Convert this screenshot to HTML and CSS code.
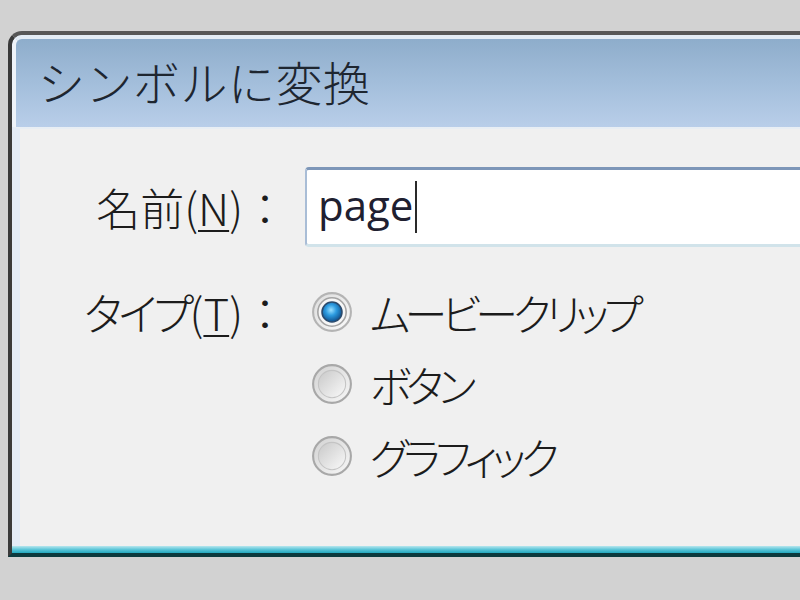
FILE: index.html
```html
<!DOCTYPE html>
<html lang="ja">
<head>
<meta charset="utf-8">
<title>シンボルに変換</title>
<link rel="stylesheet" href="styles.css">
</head>
<body>
<div class="window">
  <div class="titlebar"><span class="title">シンボルに変換</span></div>
  <div class="client">
    <div class="form">
      <div class="label">名前(<u>N</u>)：</div>
      <div class="textbox"><span class="value">page</span><span class="caret"></span></div>
      <div class="label label-type"><span class="kana">タイプ</span>(<u>T</u>)：</div>
      <div class="options">
        <div class="option">
          <svg class="radio" width="42" height="42" viewBox="0 0 40 40">
            <defs>
              <radialGradient id="blue" cx="0.45" cy="0.4" r="0.6">
                <stop offset="0" stop-color="#9be0ff"/>
                <stop offset="0.45" stop-color="#2c9be0"/>
                <stop offset="1" stop-color="#0f4f8c"/>
              </radialGradient>
              <linearGradient id="ringC" x1="0" y1="0" x2="1" y2="1">
                <stop offset="0" stop-color="#dcdcdc"/>
                <stop offset="1" stop-color="#fbfbfb"/>
              </linearGradient>
            </defs>
            <circle cx="20" cy="20" r="18" fill="url(#ringC)" stroke="#b4b4b4" stroke-width="2"/>
            <circle cx="20" cy="20" r="13.5" fill="#f6f6f6" stroke="#a3a3a3" stroke-width="1.5"/>
            <circle cx="20" cy="20" r="9.5" fill="url(#blue)" stroke="#2a4a6c" stroke-width="1.5"/>
          </svg>
          <span class="opt-text">ムービークリップ</span>
        </div>
        <div class="option">
          <svg class="radio" width="42" height="42" viewBox="0 0 40 40">
            <defs>
              <linearGradient id="ringU1" x1="0" y1="0" x2="1" y2="1">
                <stop offset="0" stop-color="#d2d2d2"/>
                <stop offset="1" stop-color="#f8f8f8"/>
              </linearGradient>
              <linearGradient id="inU1" x1="0" y1="0" x2="1" y2="1">
                <stop offset="0" stop-color="#c8c8c8"/>
                <stop offset="1" stop-color="#fafafa"/>
              </linearGradient>
            </defs>
            <circle cx="20" cy="20" r="18" fill="url(#ringU1)" stroke="#a8a8a8" stroke-width="2"/>
            <circle cx="20" cy="20" r="13" fill="url(#inU1)" stroke="#c4c4c4" stroke-width="1"/>
          </svg>
          <span class="opt-text">ボタン</span>
        </div>
        <div class="option">
          <svg class="radio" width="42" height="42" viewBox="0 0 40 40">
            <defs>
              <linearGradient id="ringU2" x1="0" y1="0" x2="1" y2="1">
                <stop offset="0" stop-color="#d2d2d2"/>
                <stop offset="1" stop-color="#f8f8f8"/>
              </linearGradient>
              <linearGradient id="inU2" x1="0" y1="0" x2="1" y2="1">
                <stop offset="0" stop-color="#c8c8c8"/>
                <stop offset="1" stop-color="#fafafa"/>
              </linearGradient>
            </defs>
            <circle cx="20" cy="20" r="18" fill="url(#ringU2)" stroke="#a8a8a8" stroke-width="2"/>
            <circle cx="20" cy="20" r="13" fill="url(#inU2)" stroke="#c4c4c4" stroke-width="1"/>
          </svg>
          <span class="opt-text">グラフィック</span>
        </div>
      </div>
    </div>
  </div>
  <div class="bottombar"></div>
</div>
</body>
</html>
```

FILE: styles.css
```css
html, body {
  margin: 0;
  padding: 0;
}
body {
  background: #d2d2d2;
  width: 800px;
  height: 600px;
  overflow: hidden;
  font-family: "Noto Sans CJK JP", "Noto Sans", sans-serif;
  font-weight: 300;
  color: #1c1c1c;
}
.window {
  box-sizing: border-box;
  margin: 31px 0 0 8px;
  width: 792px;
  height: 526px;
  border-top: 4px solid #575757;
  border-left: 4px solid #3a3a3a;
  border-bottom: 4px solid #0c3a3e;
  border-top-left-radius: 14px;
  background: #e3ebf6;
  overflow: hidden;
  display: flex;
  flex-direction: column;
}
.titlebar {
  box-sizing: border-box;
  height: 92px;
  flex: none;
  border-top: 4px solid #e3ecf5;
  border-left: 4px solid #eef3f9;
  border-top-left-radius: 10px;
  background: linear-gradient(to bottom, #8eadcb 0%, #a3bedb 50%, #b9cee9 100%);
  padding-left: 22px;
  display: flex;
  align-items: center;
}
.title {
  font-size: 47px;
  line-height: 1;
  color: #1e2630;
  margin-top: -6px;
  letter-spacing: 0.5px;
}
.client {
  flex: 1;
  border-left: 8px solid #e3ebf6;
  border-top: 2px solid #e8eef4;
  background: #f0f0f0;
}
.bottombar {
  height: 7px;
  flex: none;
  background: linear-gradient(to bottom, #b6e6ee 0%, #5cc6d8 50%, #22a9c0 100%);
}
.form {
  padding-top: 38px;
  display: grid;
  grid-template-columns: 267px 1fr;
  column-gap: 18px;
  row-gap: 29px;
  align-items: start;
}
.label {
  font-size: 44px;
  line-height: 80px;
  text-align: right;
  white-space: nowrap;
  color: #1c1c1c;
}
.label u {
  text-decoration-thickness: 2px;
  text-underline-offset: 4px;
}
.label-type {
  line-height: 72px;
}
.kana {
  font-feature-settings: "palt";
  letter-spacing: -4px;
}
.textbox {
  box-sizing: border-box;
  height: 80px;
  background: #ffffff;
  border-top: 3px solid #7d96b8;
  border-left: 2px solid #a9bdd6;
  border-bottom: 3px solid #d1e3ea;
  border-top-left-radius: 4px;
  border-bottom-left-radius: 4px;
  display: flex;
  align-items: center;
  padding-left: 11px;
}
.value {
  font-family: "Open Sans", "Noto Sans", sans-serif;
  font-weight: 400;
  font-size: 42px;
  color: #202030;
  line-height: 1;
  margin-top: -4px;
}
.caret {
  width: 2px;
  height: 52px;
  background: #2a2a2a;
  margin-left: 2px;
}
.options {
  display: flex;
  flex-direction: column;
}
.option {
  height: 72px;
  display: flex;
  align-items: center;
  padding-left: 6px;
}
.radio {
  flex: none;
}
.opt-text {
  margin-left: 17px;
  font-size: 43px;
  line-height: 1;
  font-feature-settings: "palt";
  letter-spacing: -5.5px;
  color: #1c1c1c;
}
```
